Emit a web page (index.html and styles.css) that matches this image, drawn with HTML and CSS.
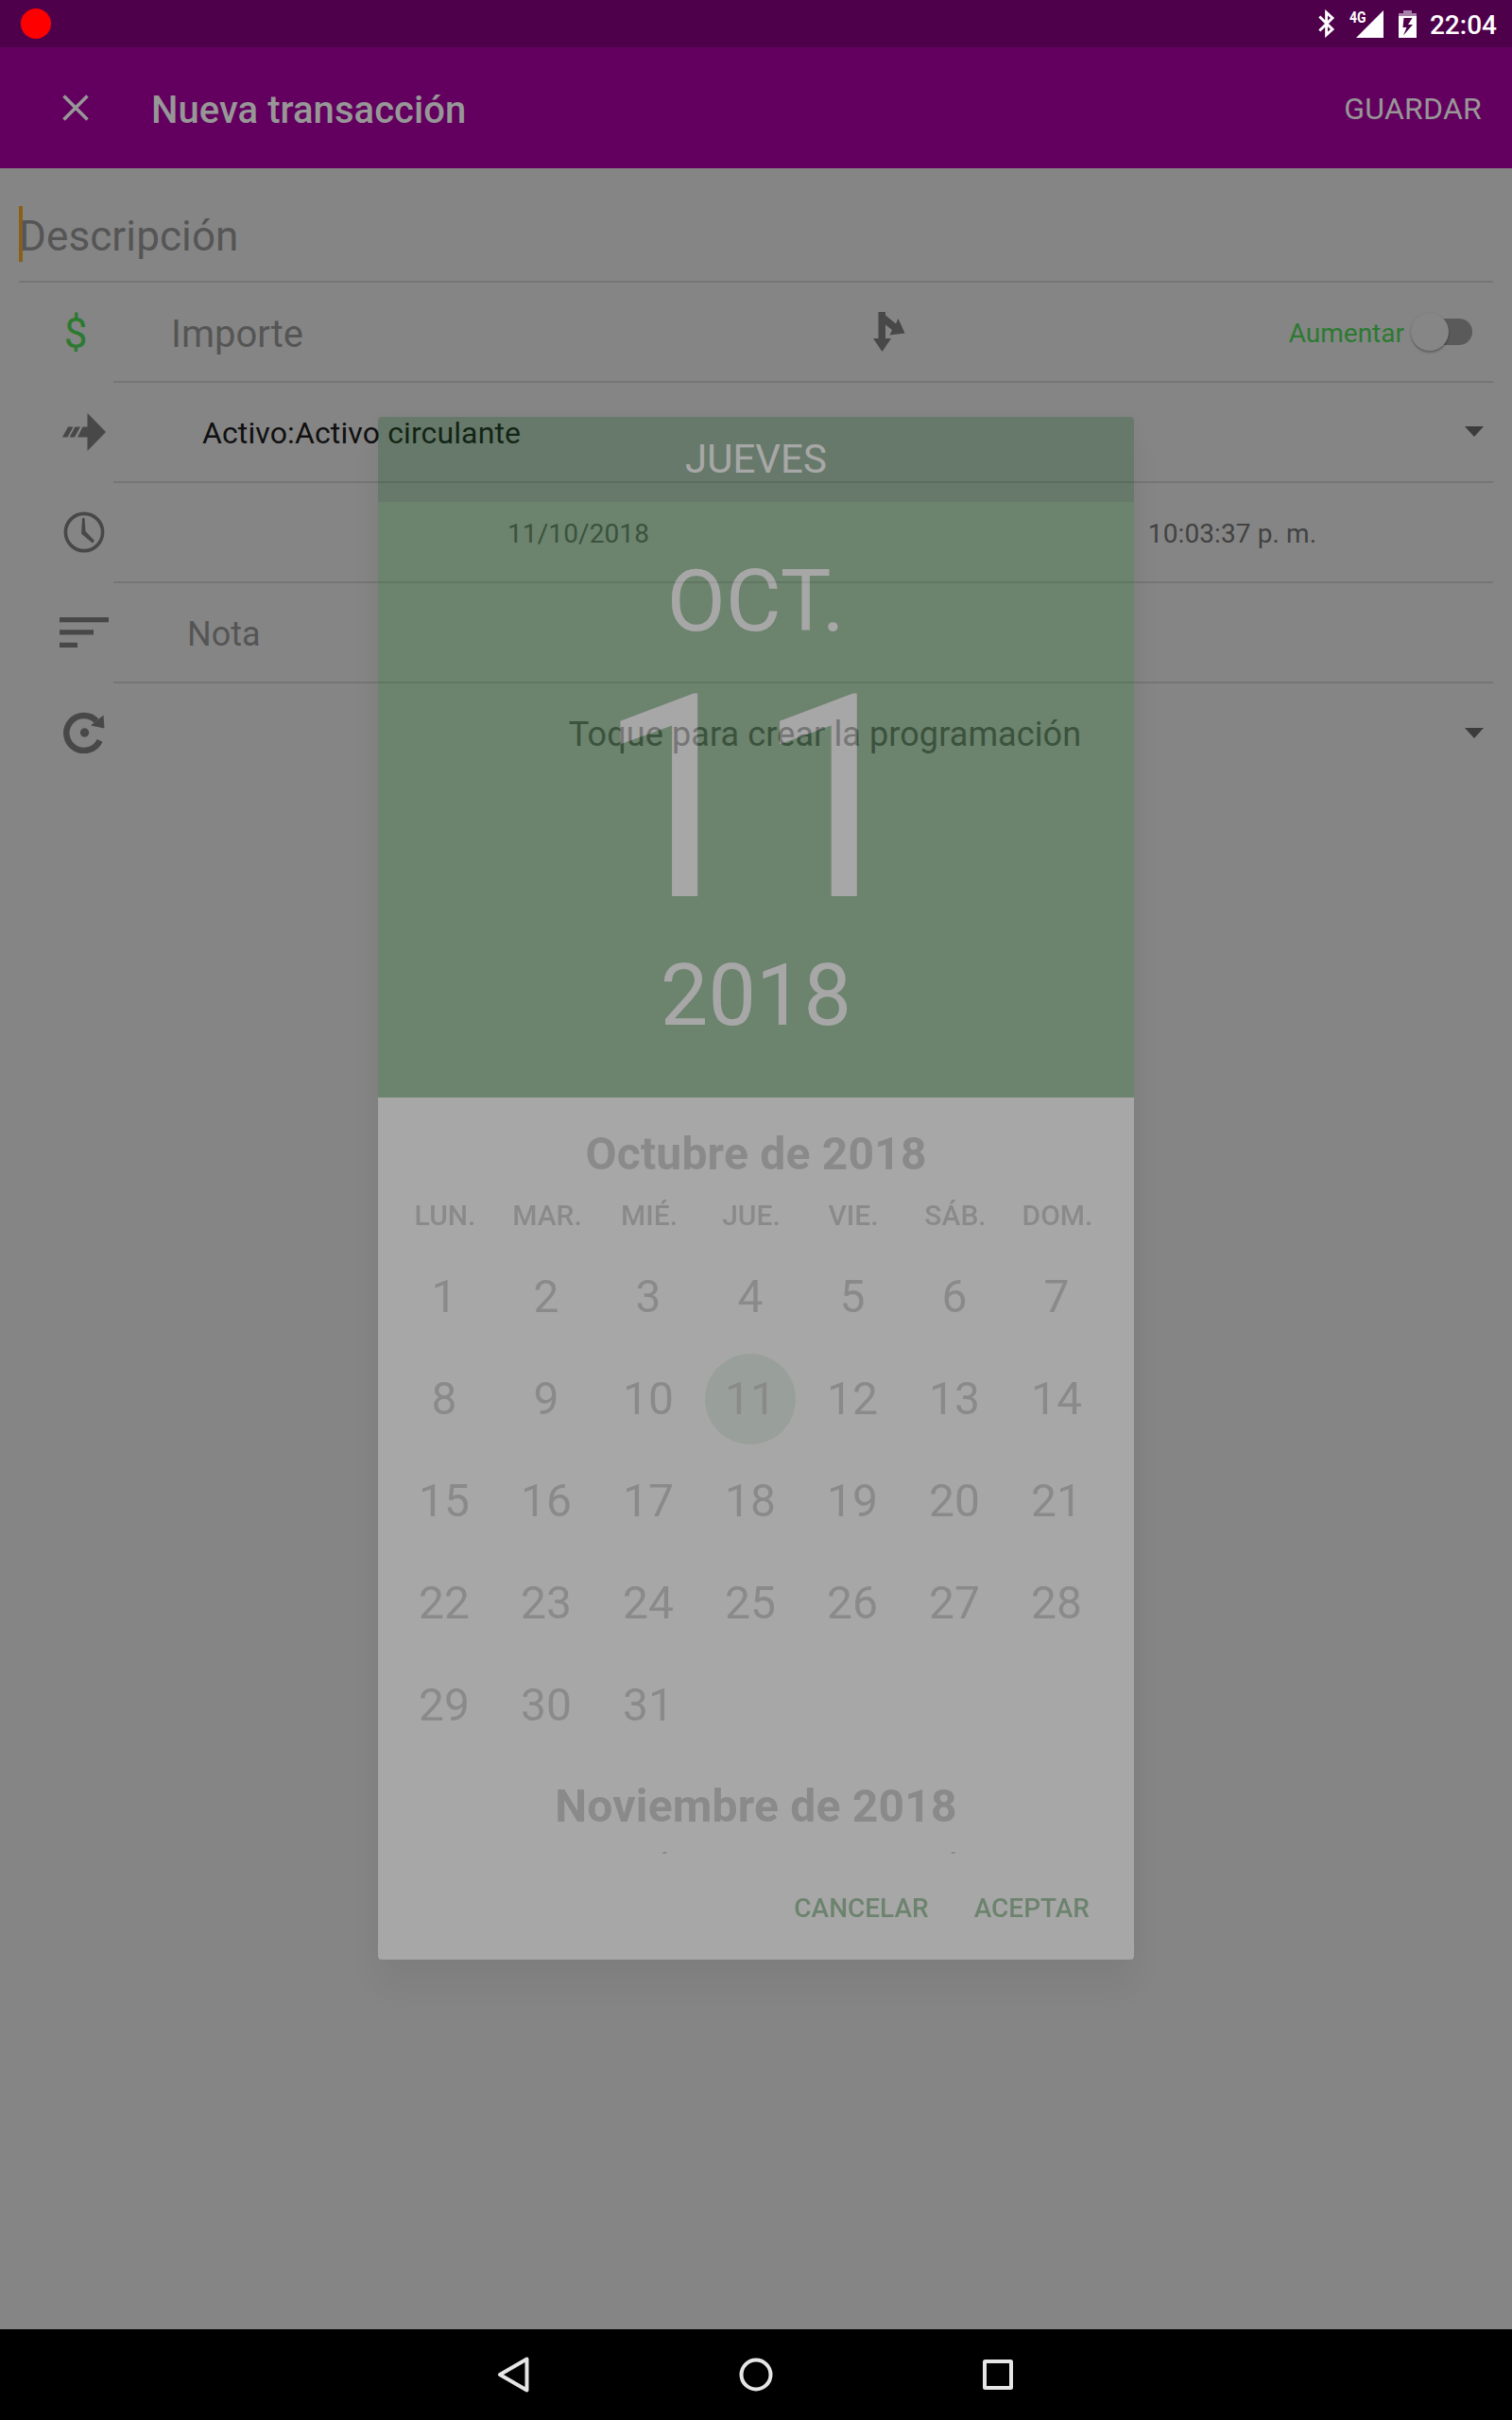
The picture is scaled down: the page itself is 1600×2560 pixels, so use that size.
FILE: index.html
```html
<!DOCTYPE html>
<html lang="es">
<head>
<meta charset="utf-8">
<title>Nueva transacción</title>
<link rel="stylesheet" href="styles.css">
</head>
<body>
<div class="screen">
  <header class="status">
    <span class="record"></span>
    <div class="status-icons">
      <svg class="bluetooth" width="18" height="30" viewBox="0 0 18 30"><path d="M1.3 7.5 15 21 8.6 26.800V3.200L15 9 1.300 22.500" fill="none" stroke="#fff" stroke-width="2.900"/></svg>
      <div class="signal">
        <span class="network">4G</span>
        <svg width="29" height="29" viewBox="0 0 29 29"><path d="M0 29 29 0V29z" fill="#fff"/></svg>
      </div>
      <svg class="battery" width="19" height="29" viewBox="0 0 19 29"><path d="M5 0h9v3h5v3H0V3h5z" fill="#a880a8"/><path fill-rule="evenodd" d="M0 6h19v23H0zM5.500 8 4.500 18h4L5 26.500 15 15h-5l4.500-7z" fill="#fff"/></svg>
      <span class="time">22:04</span>
    </div>
  </header>

  <div class="appbar">
    <svg class="close" width="28" height="28" viewBox="0 0 28 28"><path d="M1.500 1.500 26.500 26.500M26.500 1.500 1.500 26.500" stroke="#979797" stroke-width="3.600"/></svg>
    <h1 class="title">Nueva transacción</h1>
    <span class="save">GUARDAR</span>
  </div>

  <main class="form">
    <div class="description"><span class="cursor"></span><span class="hint-lg">Descripción</span></div>

    <div class="row">
      <div class="lead"><span class="dollar">$</span></div>
      <div class="field amount">
        <span class="hint-md">Importe</span>
        <svg class="split" width="34" height="42" viewBox="0 0 34 42"><path d="M5.500 0h7.500v3.500L24 12.500 26.500 7l7 15.500-16 2 2.500-5.500-7-5.500V28h6L9.500 42 0 28h5.500z" fill="#484848"/></svg>
        <span class="increase">Aumentar</span>
        <span class="switch"><span class="track"></span><span class="thumb"></span></span>
      </div>
    </div>

    <div class="row">
      <div class="lead"><svg width="46" height="40" viewBox="0 0 46 40"><path d="M26.500 0 46 20 26.500 40V25.500H16L21.500 14.500h5zM6 14.500h5.500L5.500 25.500H0zM13.500 14.500h5.500L13 25.500H7.500z" fill="#484848"/></svg></div>
      <div class="field account"><span>Activo:Activo circulante</span><i class="caret"></i></div>
    </div>

    <div class="row">
      <div class="lead"><svg width="44" height="44" viewBox="0 0 44 44"><circle cx="22" cy="22" r="19.600" fill="none" stroke="#484848" stroke-width="3.600"/><path d="M20 7.500q1.300-1.500 2.600 0L23.500 21l9.500 10-2.200 2.500L19 23.500z" fill="#484848"/></svg></div>
      <div class="field when"><span class="date">11/10/2018</span><span class="clock">10:03:37 p. m.</span></div>
    </div>

    <div class="row">
      <div class="lead"><svg width="52" height="32" viewBox="0 0 52 32"><path d="M0 0h52v5.300H0zM0 13.300h36v5.300H0zM0 26.700h19V32H0z" fill="#484848"/></svg></div>
      <div class="field note"><span>Nota</span></div>
    </div>

    <div class="row last">
      <div class="lead"><svg width="44" height="44" viewBox="0 0 44 44"><path d="M35 9.500A18.500 18.500 0 1 0 38.600 30.300" fill="none" stroke="#484848" stroke-width="6.500"/><path d="M29 14.500 42.500 3.500 43.500 17.500z" fill="#484848"/><circle cx="22.500" cy="22" r="4.700" fill="#484848"/></svg></div>
      <div class="field schedule"><span class="tap">Toque para crear la programación</span><i class="caret"></i></div>
    </div>
  </main>

  <nav class="navbar">
    <svg width="40" height="40" viewBox="0 0 40 40"><path d="M33.500 3.500V36.500L5 20z"/></svg>
    <svg width="40" height="40" viewBox="0 0 40 40"><circle cx="20" cy="20" r="15.500"/></svg>
    <svg width="40" height="40" viewBox="0 0 40 40"><rect x="6" y="6" width="28" height="28" rx=".5"/></svg>
  </nav>

  <section class="dialog">
    <div class="picked">
      <div class="weekday">JUEVES</div>
      <div class="month-name">OCT.</div>
      <div class="day-number">11</div>
      <div class="year">2018</div>
    </div>
    <div class="calendar">
      <div class="month">
        <h2>Octubre de 2018</h2>
        <div class="week names"><span>LUN.</span><span>MAR.</span><span>MIÉ.</span><span>JUE.</span><span>VIE.</span><span>SÁB.</span><span>DOM.</span></div>
        <div class="week"><span>1</span><span>2</span><span>3</span><span>4</span><span>5</span><span>6</span><span>7</span></div>
        <div class="week"><span>8</span><span>9</span><span>10</span><span class="selected">11</span><span>12</span><span>13</span><span>14</span></div>
        <div class="week"><span>15</span><span>16</span><span>17</span><span>18</span><span>19</span><span>20</span><span>21</span></div>
        <div class="week"><span>22</span><span>23</span><span>24</span><span>25</span><span>26</span><span>27</span><span>28</span></div>
        <div class="week"><span>29</span><span>30</span><span>31</span></div>
      </div>
      <div class="month">
        <h2>Noviembre de 2018</h2>
        <div class="week names"><span>LUN.</span><span>MAR.</span><span>MIÉ.</span><span>JUE.</span><span>VIE.</span><span>SÁB.</span><span>DOM.</span></div>
      </div>
    </div>
    <div class="actions"><span>CANCELAR</span><span>ACEPTAR</span></div>
  </section>
</div>
</body>
</html>
```

FILE: styles.css
```css
* { box-sizing: border-box; }

body {
  margin: 0;
  font-family: Roboto, sans-serif;
  background: #858585;
}

svg { display: block; flex: none; }

.screen {
  position: relative;
  display: flex;
  flex-direction: column;
  width: 1600px;
  height: 2560px;
  overflow: hidden;
}

/* Status bar */
.status {
  display: flex;
  justify-content: space-between;
  align-items: center;
  height: 50px;
  padding: 0 16px 0 22px;
  background: #4e004a;
  color: #fff;
}
.record { width: 32px; height: 32px; border-radius: 50%; background: #f00; }
.status-icons { display: flex; align-items: center; }
.bluetooth { margin-right: 15px; }
.signal { display: flex; align-items: flex-start; margin-right: 16px; }
.network {
  margin-right: -11px;
  width: 18px;
  font-size: 17px;
  line-height: 15px;
  font-weight: 700;
  transform: scaleX(.82);
  transform-origin: 0 0;
}
.battery { margin-right: 14px; }
.time { font-size: 28px; font-weight: 500; line-height: 50px; padding-top: 3px; }

/* App bar */
.appbar {
  display: flex;
  align-items: center;
  height: 128px;
  padding: 0 32px 0 66px;
  background: #63005f;
  color: #979797;
}
.title {
  margin: 0 auto 0 66px;
  padding-top: 5px;
  font-size: 40px;
  font-weight: 500;
  line-height: 60px;
  letter-spacing: .05px;
}
.save { font-size: 32px; padding-top: 1px; letter-spacing: .25px; }

/* Form */
.form { flex: 1; padding: 0 20px; color: #484848; }
.description {
  display: flex;
  align-items: center;
  height: 121px;
  padding-top: 20px;
  border-bottom: 2px solid #757575;
  font-size: 44px;
  letter-spacing: .1px;
  color: #555;
}
.hint-lg { padding-top: 5px; }
.cursor { width: 4px; height: 59px; margin: 0 -4px 0 0; background: #896014; }
.row { display: flex; height: 106px; }
.lead {
  display: flex;
  align-items: center;
  justify-content: center;
  width: 100px;
  padding: 0 0 2px 38px;
}
.dollar { margin-right: 18px; padding-top: 4px; font-size: 44px; color: #2b7a30; }
.field {
  display: flex;
  align-items: center;
  flex: 1;
  border-bottom: 2px solid #757575;
}
.last .field { border-bottom-color: transparent; }
.amount { padding: 0 22px 0 61px; }
.hint-md { padding-top: 4px; font-size: 40px; color: #555; }
.split { margin: 0 auto 0 603px; }
.increase { padding-top: 2px; font-size: 28px; color: #2b7a30; }
.switch { display: flex; align-items: center; flex-direction: row-reverse; width: 65px; margin-left: 7px; }
.track { width: 50px; height: 28px; border-radius: 14px; background: #5a5a5a; }
.thumb {
  width: 40px;
  height: 40px;
  margin-right: -25px;
  border-radius: 50%;
  background: #868686;
  box-shadow: 0 2px 2px rgba(0, 0, 0, .25), 0 0 2px rgba(0, 0, 0, .1);
  z-index: 1;
}
.account { padding: 2px 10px 0 94px; font-size: 32px; letter-spacing: .12px; color: #101010; justify-content: space-between; }
.caret { margin-bottom: 3px; border: 10px solid transparent; border-top: 11px solid #3c3c3c; border-bottom: 0; }
.when { display: grid; grid-template-columns: 984px 400px; padding-top: 2px; font-size: 28px; letter-spacing: .1px; text-align: center; color: #424242; }
.note { padding: 3px 0 0 78px; font-size: 36px; color: #555; }
.schedule { padding: 3px 10px 0 0; font-size: 36px; letter-spacing: .1px; color: #424242; }
.tap { flex: 1; padding-left: 76px; text-align: center; }

/* System navigation */
.navbar {
  display: flex;
  align-items: center;
  justify-content: center;
  gap: 216px;
  height: 96px;
  background: #000;
}
.navbar svg { fill: none; stroke: #e6e6e6; stroke-width: 4; stroke-linejoin: round; }

/* Date picker, mid fade-in */
.dialog {
  position: absolute;
  left: 400px;
  top: 441px;
  width: 800px;
  height: 1632px;
  border-radius: 4px;
  background: #fff;
  opacity: .279;
  box-shadow: 0 30px 34px rgba(0, 0, 0, .17), 0 0 20px rgba(0, 0, 0, .08);
}
.picked {
  height: 720px;
  border-radius: 4px 4px 0 0;
  overflow: hidden;
  background: #2e7d32;
  color: #fff;
  text-align: center;
}
.weekday { height: 90px; margin-bottom: 53px; background: #195c26; font-size: 42px; line-height: 90px; }
.month-name { font-size: 90px; line-height: 106px; letter-spacing: .3px; }
.day-number { font-size: 300px; line-height: 311px; }
.year { font-size: 90px; line-height: 106px; }

.calendar { height: 800px; overflow: hidden; color: #979797; }
.month { height: 690px; padding: 30px 16px 0; }
.month h2 { margin: 0; font-size: 48px; line-height: 60px; letter-spacing: .2px; text-align: center; font-weight: 700; }
.week { display: grid; grid-template-columns: repeat(7, 108px); font-size: 48px; line-height: 108px; text-align: center; }
.names { height: 67px; padding-left: 1px; font-size: 30px; line-height: 69px; font-weight: 500; }
.selected {
  width: 96px;
  height: 96px;
  margin: 6px;
  border-radius: 50%;
  line-height: 96px;
  background: #cde2cf;
}
.actions {
  display: flex;
  align-items: center;
  justify-content: flex-end;
  gap: 48px;
  height: 112px;
  padding: 2px 47px 0 0;
  color: #2e7d32;
  font-size: 28px;
  font-weight: 500;
}
```
